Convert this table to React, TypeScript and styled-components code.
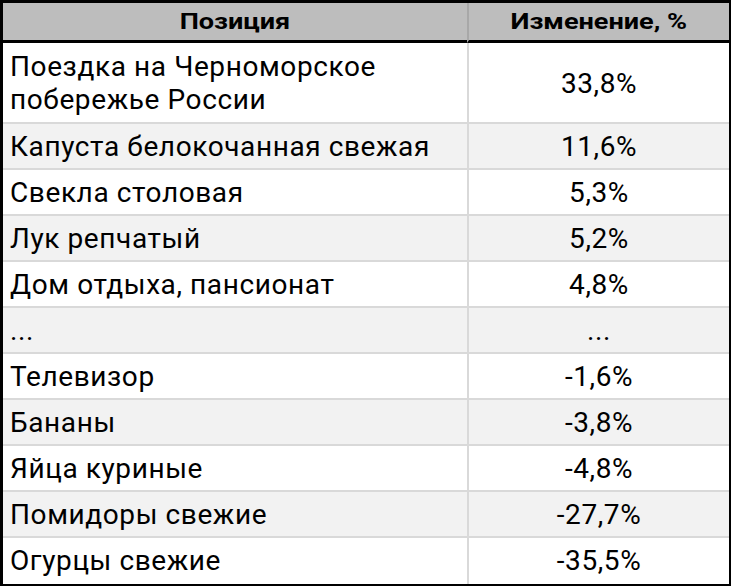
import React from "react";
import styled, { createGlobalStyle } from "styled-components";

const GlobalStyle = createGlobalStyle`
  html, body {
    margin: 0;
    padding: 0;
    background: #ffffff;
  }
  body {
    font-family: Roboto, "Liberation Sans", Arial, sans-serif;
    color: #000;
  }
`;

const Table = styled.table`
  width: 731px;
  box-sizing: border-box;
  border-collapse: separate;
  border-spacing: 0;
  border-top: 3px solid #000;
  border-left: 3px solid #000;
  border-right: 2px solid #000;
  border-bottom: 2px solid #000;
  table-layout: fixed;
`;

const HeadCell = styled.th<{ $first?: boolean }>`
  background: #bdbdbd;
  height: 37px;
  padding: 0;
  text-align: center;
  border-bottom: 3px solid #000;
  border-left: ${(p) => (p.$first ? "none" : "2px solid #a8a8a8")};
  width: ${(p) => (p.$first ? "464px" : "auto")};
`;

const HeadLabel = styled.span`
  display: inline-block;
  font-size: 22px;
  font-weight: 700;
  color: #000;
  transform: scaleX(1.23);
  transform-origin: center;
`;

const Row = styled.tr<{ $shaded: boolean }>`
  background: ${(p) => (p.$shaded ? "#f2f2f2" : "#ffffff")};

  &:first-child td {
    padding-top: 7px;
    padding-bottom: 6px;
  }

  &:last-child td {
    padding-bottom: 7px;
  }
`;

const Cell = styled.td<{ $value?: boolean; $last?: boolean }>`
  padding: 6px ${(p) => (p.$value ? "0" : "6px")} 5px
    ${(p) => (p.$value ? "0" : "7px")};
  font-size: 28px;
  line-height: 33px;
  letter-spacing: 0.6px;
  text-align: ${(p) => (p.$value ? "center" : "left")};
  vertical-align: middle;
  color: #000;
  border-bottom: ${(p) => (p.$last ? "none" : "2px solid #d9d9d9")};
  border-left: ${(p) => (p.$value ? "2px solid #d9d9d9" : "none")};
`;

const rows: [string, string][] = [
  ["Поездка на Черноморское побережье России", "33,8%"],
  ["Капуста белокочанная свежая", "11,6%"],
  ["Свекла столовая", "5,3%"],
  ["Лук репчатый", "5,2%"],
  ["Дом отдыха, пансионат", "4,8%"],
  ["...", "..."],
  ["Телевизор", "-1,6%"],
  ["Бананы", "-3,8%"],
  ["Яйца куриные", "-4,8%"],
  ["Помидоры свежие", "-27,7%"],
  ["Огурцы свежие", "-35,5%"],
];

export default function App() {
  return (
    <>
      <GlobalStyle />
      <Table>
        <thead>
          <tr>
            <HeadCell $first>
              <HeadLabel>Позиция</HeadLabel>
            </HeadCell>
            <HeadCell>
              <HeadLabel>Изменение, %</HeadLabel>
            </HeadCell>
          </tr>
        </thead>
        <tbody>
          {rows.map(([name, value], i) => {
            const last = i === rows.length - 1;
            return (
              <Row key={name + i} $shaded={i % 2 === 1}>
                <Cell $last={last}>{name}</Cell>
                <Cell $value $last={last}>
                  {value}
                </Cell>
              </Row>
            );
          })}
        </tbody>
      </Table>
    </>
  );
}
